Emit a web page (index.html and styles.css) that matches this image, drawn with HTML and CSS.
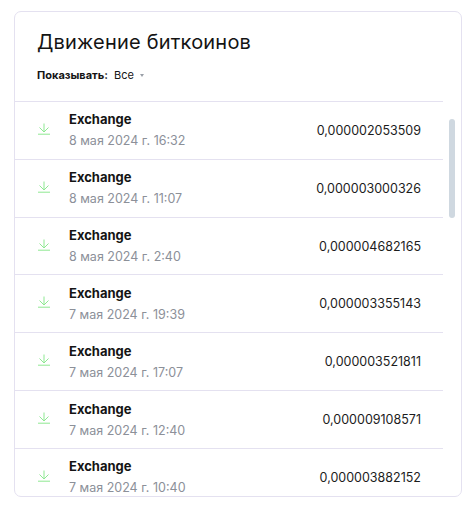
FILE: index.html
```html
<!DOCTYPE html>
<html lang="ru">
<head>
  <meta charset="UTF-8">
  <meta name="viewport" content="width=device-width, initial-scale=1.0">
  <title>Движение биткоинов</title>
  <link rel="stylesheet" href="styles.css">
</head>
<body>
  <div class="card">
    <div class="card-head">
      <h2>Движение биткоинов</h2>
      <div class="filter">
        <span class="filter-label">Показывать:</span>
        <span class="filter-value">Все</span>
        <span class="caret"></span>
      </div>
    </div>
    <div class="list-wrap">
      <div class="list" id="list"></div>
      <div class="scrollbar"><div class="thumb"></div></div>
    </div>
  </div>

  <script>
    const rows = [
      ['8 мая 2024 г. 16:32', '0,000002053509'],
      ['8 мая 2024 г. 11:07', '0,000003000326'],
      ['8 мая 2024 г. 2:40', '0,000004682165'],
      ['7 мая 2024 г. 19:39', '0,000003355143'],
      ['7 мая 2024 г. 17:07', '0,000003521811'],
      ['7 мая 2024 г. 12:40', '0,000009108571'],
      ['7 мая 2024 г. 10:40', '0,000003882152']
    ];

    const icon = '<svg class="icon" width="14" height="12" viewBox="0 0 14 12" fill="none" stroke="#8ee892" stroke-width="1">' +
      '<path d="M7 0.5V8.5M2.5 4.5L7 9L11.5 4.5M1 11.2H13"/></svg>';

    const list = document.getElementById('list');
    list.innerHTML = rows.map(r =>
      '<div class="row">' + icon +
      '<div class="info"><div class="name">Exchange</div><div class="date">' + r[0] + '</div></div>' +
      '<div class="amount">' + r[1] + '</div></div>'
    ).join('');
  </script>
</body>
</html>
```

FILE: styles.css
```css
body {
  margin: 0;
  padding: 11px 0 0 14px;
  background: #fff;
  font-family: Inter, "Noto Sans", sans-serif;
  color: #141414;
}
.card {
  width: 448px;
  height: 486px;
  box-sizing: border-box;
  border: 1px solid #e4e1f0;
  border-radius: 7px;
  display: flex;
  flex-direction: column;
  overflow: hidden;
}
.card-head {
  padding: 18px 0 0 22px;
  height: 89px;
  box-sizing: border-box;
}
.card-head h2 {
  margin: 0;
  font-size: 20px;
  font-weight: 400;
  line-height: 24px;
  letter-spacing: 0.2px;
}
.filter {
  display: flex;
  align-items: center;
  margin-top: 14px;
  font-size: 11px;
}
.filter-label {
  font-weight: 700;
  margin-right: 6px;
}
.caret {
  width: 0;
  height: 0;
  margin-left: 6px;
  border-left: 2.5px solid transparent;
  border-right: 2.5px solid transparent;
  border-top: 3px solid #9aa0a8;
}
.list-wrap {
  flex: 1;
  min-height: 0;
  display: flex;
}
.list {
  flex: 1;
  overflow: hidden;
}
.scrollbar {
  width: 18px;
  padding: 18px 6px 0;
  box-sizing: border-box;
}
.thumb {
  height: 99px;
  background: #cfd8e0;
  border-radius: 3px;
}
.row {
  display: flex;
  align-items: center;
  height: 57.83px;
  box-sizing: border-box;
  border-top: 1px solid #e4e1f0;
  padding: 0 22px;
}
.icon {
  flex: none;
  margin: -3px 18px 0 0;
}
.info {
  flex: 1;
}
.name {
  font-size: 13px;
  font-weight: 700;
  line-height: 18px;
}
.date {
  margin-top: 4px;
  font-size: 12.5px;
  line-height: 18px;
  color: #8c9099;
}
.amount {
  font-size: 12.5px;
  color: #1c1c1c;
}
```
